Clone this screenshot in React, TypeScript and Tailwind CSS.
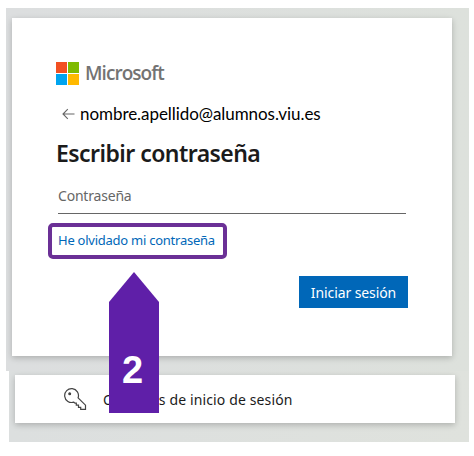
function MicrosoftLogo() {
  return (
    <div className="grid grid-cols-[11px_11px] grid-rows-[11px_11px] gap-px">
      <div className="bg-[#f25022]" />
      <div className="bg-[#7fba00]" />
      <div className="bg-[#00a4ef]" />
      <div className="bg-[#ffb900]" />
    </div>
  );
}

function BackArrow() {
  return (
    <svg width="13" height="12" viewBox="0 0 13 12" fill="none" stroke="#666" strokeWidth="1.1">
      <path d="M5.8 1.2 1 6l4.8 4.8M1 6h11.5" />
    </svg>
  );
}

function KeyIcon() {
  return (
    <svg width="23" height="23" viewBox="0 0 23 23" fill="none" stroke="#444" strokeWidth="1.2">
      <path d="M14.1 9.8A6.9 6.9 0 1 0 9.8 14.1L11 15.2h1.3v2h2.2v2.2h2.2v2h4.8v-4.2Z" />
      <circle cx="5.7" cy="5.7" r="0.9" fill="#444" />
    </svg>
  );
}

function StepPointer() {
  return (
    <div className="absolute left-[109px] top-[272px] flex h-[141px] w-[50px] justify-center bg-[#5f1fa8] pt-[78px] pr-[3px] font-['Liberation_Sans',Arial,sans-serif] text-[38px] leading-[40px] font-bold text-white [clip-path:polygon(50%_0,100%_30px,100%_100%,0_100%,0_30px)]">
      2
    </div>
  );
}

export default function App() {
  return (
    <div className="relative h-[456px] w-[474px] overflow-hidden bg-white pt-2 font-['Noto_Sans','Open_Sans',sans-serif] text-[#1b1b1b]">
      <main className="ml-1.5 h-[363px] w-[463px] overflow-hidden bg-linear-to-r from-[#dcdedf] to-[#dde1dc] pt-2.5 pl-1.5">
        <form className="flex h-[338px] w-[440px] flex-col bg-white pt-11 pr-11 pl-11 shadow-[0_2px_6px_rgba(0,0,0,0.22)]">
          <div className="flex h-[23px] items-center gap-1.5">
            <MicrosoftLogo />
            <span className="font-['Open_Sans',sans-serif] text-[19px] leading-[23px] font-semibold tracking-[-0.95px] text-[#737373]">
              Microsoft
            </span>
          </div>
          <div className="mt-[17px] flex h-6 items-center gap-[5px] pl-1.5">
            <BackArrow />
            <span className="font-[Lato,sans-serif] text-[17px] leading-[22px] tracking-[-0.06px] whitespace-nowrap text-black">
              nombre.apellido@alumnos.viu.es
            </span>
          </div>
          <h1 className="mt-[13px] h-7 text-[23px] leading-7 font-semibold tracking-[-0.55px] whitespace-nowrap">
            Escribir contraseña
          </h1>
          <div className="mt-[11px] ml-0.5 h-9 w-[348px] border-b border-[#666] text-sm leading-9 tracking-[-0.2px] text-[#666]">
            Contraseña
          </div>
          <a className="mt-[9px] -ml-2 flex h-9 w-[179px] shrink-0 items-center rounded-[5px] border-4 border-[#6b3096] pl-1.5 text-[13px] tracking-[-0.25px] whitespace-nowrap text-[#0067b8]">
            He olvidado mi contraseña
          </a>
          <button
            type="button"
            className="mt-[17px] h-8 w-[109px] self-end bg-[#0067b8] pt-px text-sm tracking-[-0.1px] whitespace-nowrap text-white"
          >
            Iniciar sesión
          </button>
        </form>
      </main>
      <section className="ml-[9px] h-[71px] w-[460px] overflow-hidden bg-linear-to-r from-[#dcdfdf] to-[#dfe2dd] pt-1 pl-1.5">
        <div className="flex h-12 w-[440px] items-center bg-white pl-[49px] shadow-[0_2px_6px_rgba(0,0,0,0.22)]">
          <KeyIcon />
          <span className="ml-4 pt-0.5 text-sm tracking-[0.13px] whitespace-nowrap">
            Opciones de inicio de sesión
          </span>
        </div>
      </section>
      <StepPointer />
    </div>
  );
}
